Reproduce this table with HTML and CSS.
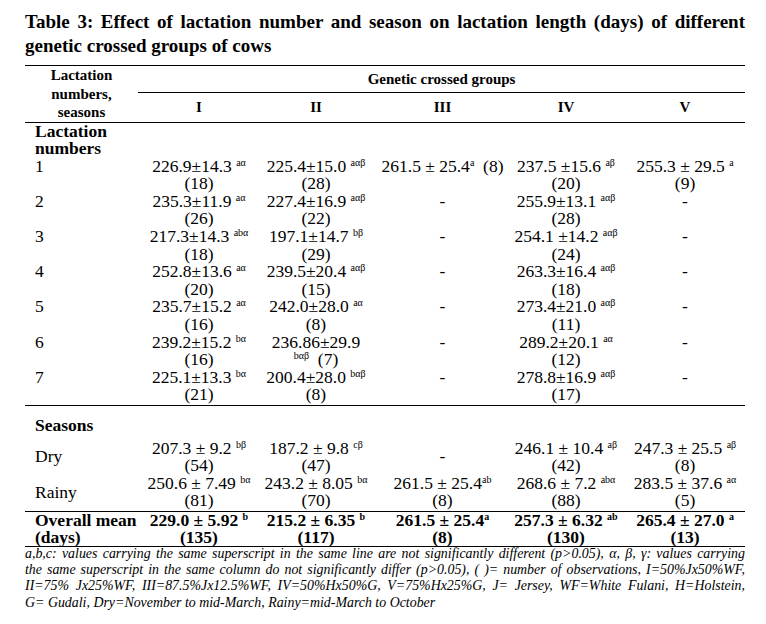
FILE: index.html
```html
<!DOCTYPE html>
<html>
<head>
<meta charset="utf-8">
<link rel="stylesheet" href="styles.css">
</head>
<body>
<div class="page">
  <h1 class="title"><span class="l1">Table 3: Effect of lactation number and season on lactation length (days) of different</span>genetic crossed groups of cows</h1>
  <table class="data">
    <colgroup>
      <col class="c-lab"><col class="c-1"><col class="c-2"><col class="c-3"><col class="c-4"><col class="c-5">
    </colgroup>
    <thead>
      <tr class="h1">
        <th rowspan="2" class="hlab">Lactation<br>numbers,<br>seasons</th>
        <th colspan="5" class="hgroup">Genetic crossed groups</th>
      </tr>
      <tr class="h2">
        <th>I</th><th>II</th><th>III</th><th>IV</th><th class="v">V</th>
      </tr>
    </thead>
    <tbody class="lact">
      <tr><td colspan="6" class="lab sect">Lactation<br>numbers</td></tr>
      <tr>
        <td class="lab">1</td>
        <td>226.9±14.3 <span class="sup">aα</span><br>(18)</td>
        <td>225.4±15.0 <span class="sup">aαβ</span><br>(28)</td>
        <td>261.5 ± 25.4<span class="sup">a</span>&nbsp; (8)</td>
        <td>237.5 ±15.6 <span class="sup">aβ</span><br>(20)</td>
        <td class="v">255.3 ± 29.5 <span class="sup">a</span><br>(9)</td>
      </tr>
      <tr>
        <td class="lab">2</td>
        <td>235.3±11.9 <span class="sup">aα</span><br>(26)</td>
        <td>227.4±16.9 <span class="sup">aαβ</span><br>(22)</td>
        <td>-</td>
        <td>255.9±13.1 <span class="sup">aαβ</span><br>(28)</td>
        <td class="v">-</td>
      </tr>
      <tr>
        <td class="lab">3</td>
        <td>217.3±14.3 <span class="sup">abα</span><br>(18)</td>
        <td>197.1±14.7 <span class="sup">bβ</span><br>(29)</td>
        <td>-</td>
        <td>254.1 ±14.2 <span class="sup">aαβ</span><br>(24)</td>
        <td class="v">-</td>
      </tr>
      <tr>
        <td class="lab">4</td>
        <td>252.8±13.6 <span class="sup">aα</span><br>(20)</td>
        <td>239.5±20.4 <span class="sup">aαβ</span><br>(15)</td>
        <td>-</td>
        <td>263.3±16.4 <span class="sup">aαβ</span><br>(18)</td>
        <td class="v">-</td>
      </tr>
      <tr>
        <td class="lab">5</td>
        <td>235.7±15.2 <span class="sup">aα</span><br>(16)</td>
        <td>242.0±28.0 <span class="sup">aα</span><br>(8)</td>
        <td>-</td>
        <td>273.4±21.0 <span class="sup">aαβ</span><br>(11)</td>
        <td class="v">-</td>
      </tr>
      <tr>
        <td class="lab">6</td>
        <td>239.2±15.2 <span class="sup">bα</span><br>(16)</td>
        <td>236.86±29.9<br><span class="sup">bαβ</span>&nbsp; (7)</td>
        <td>-</td>
        <td>289.2±20.1 <span class="sup">aα</span><br>(12)</td>
        <td class="v">-</td>
      </tr>
      <tr class="last">
        <td class="lab">7</td>
        <td>225.1±13.3 <span class="sup">bα</span><br>(21)</td>
        <td>200.4±28.0 <span class="sup">bαβ</span><br>(8)</td>
        <td>-</td>
        <td>278.8±16.9 <span class="sup">aαβ</span><br>(17)</td>
        <td class="v">-</td>
      </tr>
    </tbody>
    <tbody class="seasons">
      <tr><td colspan="6" class="lab sect seas">Seasons</td></tr>
      <tr class="dry">
        <td class="lab mid">Dry</td>
        <td>207.3 ± 9.2 <span class="sup">bβ</span><br>(54)</td>
        <td>187.2 ± 9.8 <span class="sup">cβ</span><br>(47)</td>
        <td class="mid">-</td>
        <td>246.1 ± 10.4 <span class="sup">aβ</span><br>(42)</td>
        <td class="v">247.3 ± 25.5 <span class="sup">aβ</span><br>(8)</td>
      </tr>
      <tr class="last">
        <td class="lab mid">Rainy</td>
        <td>250.6 ± 7.49 <span class="sup">bα</span><br>(81)</td>
        <td>243.2 ± 8.05 <span class="sup">bα</span><br>(70)</td>
        <td>261.5 ± 25.4<span class="sup">ab</span><br>(8)</td>
        <td>268.6 ± 7.2 <span class="sup">abα</span><br>(88)</td>
        <td class="v">283.5 ± 37.6 <span class="sup">aα</span><br>(5)</td>
      </tr>
    </tbody>
    <tbody class="overall">
      <tr>
        <td class="lab">Overall mean<br>(days)</td>
        <td>229.0 ± 5.92 <span class="sup">b</span><br>(135)</td>
        <td>215.2 ± 6.35 <span class="sup">b</span><br>(117)</td>
        <td>261.5 ± 25.4<span class="sup">a</span><br>(8)</td>
        <td>257.3 ± 6.32 <span class="sup">ab</span><br>(130)</td>
        <td class="v">265.4 ± 27.0 <span class="sup">a</span><br>(13)</td>
      </tr>
    </tbody>
  </table>
  <p class="note"><span class="jl">a,b,c: values carrying the same superscript in the same line are not significantly different (p&gt;0.05), α, β, γ: values carrying</span><span class="jl">the same superscript in the same column do not significantly differ (p&gt;0.05), ( )= number of observations, I=50%Jx50%WF,</span><span class="jl">II=75% Jx25%WF, III=87.5%Jx12.5%WF, IV=50%Hx50%G, V=75%Hx25%G, J= Jersey, WF=White Fulani, H=Holstein,</span>G= Gudali, Dry=November to mid-March, Rainy=mid-March to October</p>
</div>
</body>
</html>
```

FILE: styles.css
```css
html, body {
  margin: 0;
  padding: 0;
  background: #ffffff;
  color: #000000;
}

body {
  font-family: "Liberation Serif", "Times New Roman", serif;
}

.page {
  width: 720px;
  padding: 10px 0 0 25px;
}

.title {
  margin: 0 0 7px;
  font-size: 19px;
  font-weight: bold;
  line-height: 24px;
}

.title .l1 {
  display: block;
  text-align: justify;
  text-align-last: justify;
}

.data {
  width: 720px;
  border-collapse: collapse;
  table-layout: fixed;
}

.c-lab { width: 113px; }
.c-1 { width: 122px; }
.c-2 { width: 112px; }
.c-3 { width: 141px; }
.c-4 { width: 106px; }
.c-5 { width: 126px; }

.data th {
  padding: 0;
  font-size: 15px;
  line-height: 18.5px;
  font-weight: bold;
  text-align: center;
  vertical-align: middle;
}

.data thead tr.h1 th {
  border-top: 1.5px solid #000;
}

.data th.hgroup {
  height: 26px;
  border-bottom: 1.5px solid #000;
}

.data tr.h2 th {
  height: 28px;
  border-bottom: 1.5px solid #000;
}

.data th.hlab {
  border-bottom: 1.5px solid #000;
}

.data td {
  padding: 0;
  font-size: 17.5px;
  line-height: 17.6px;
  text-align: center;
  vertical-align: top;
  white-space: nowrap;
}

.data th.v,
.data td.v {
  padding-left: 6px;
}

.data td.lab {
  text-align: left;
  padding-left: 10px;
}

.data td.sect {
  font-weight: bold;
}

.data td.seas {
  padding-top: 11px;
  padding-bottom: 5px;
}

.data td.mid {
  vertical-align: middle;
}

.data tr.last td {
  border-bottom: 1.5px solid #000;
  padding-bottom: 1px;
}

.data .overall td {
  font-weight: bold;
  line-height: 17px;
  border-bottom: 1.5px solid #000;
}

.sup {
  font-size: 10px;
  line-height: 0;
  vertical-align: 0.5em;
}

.data td .sup {
  vertical-align: 6px;
}

.note {
  margin: -1px 0 0;
  font-size: 13.9px;
  line-height: 16.2px;
  font-style: italic;
}

.note .jl {
  display: block;
  text-align: justify;
  text-align-last: justify;
  white-space: nowrap;
}
```
